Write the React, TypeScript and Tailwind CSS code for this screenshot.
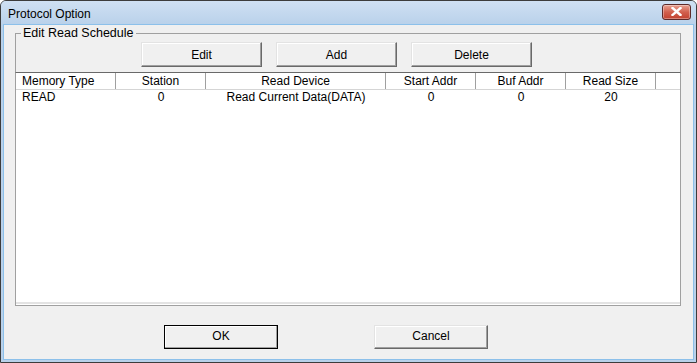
import React from "react";

const columns = [
  { title: "Memory Type", width: "w-[100px]", align: "text-left pl-[6px]" },
  { title: "Station", width: "w-[90px]", align: "text-center" },
  { title: "Read Device", width: "w-[180px]", align: "text-center" },
  { title: "Start Addr", width: "w-[90px]", align: "text-center" },
  { title: "Buf Addr", width: "w-[90px]", align: "text-center" },
  { title: "Read Size", width: "w-[90px]", align: "text-center" },
];

const rows = [["READ", "0", "Read Current Data(DATA)", "0", "0", "20"]];

const btn =
  "bg-[#f0f0f0] border border-[#696969] border-t-[#e3e3e3] border-l-[#e3e3e3] shadow-[inset_-1px_-1px_0_#a0a0a0,inset_1px_1px_0_#ffffff] text-[12px] text-black flex items-center justify-center";

const App: React.FC = () => {
  return (
    <div
      className="w-[697px] h-[363px] flex flex-col bg-[#b9d1ea] border border-[#3c3c3c] rounded-t-[6px] overflow-hidden"
      style={{ fontFamily: '"Liberation Sans", Arial, sans-serif' }}
    >
      {/* Title bar */}
      <div className="h-[24px] flex items-center justify-between pl-[7px] pr-[5px] bg-gradient-to-b from-[#cfe0f3] to-[#b9d1ea]">
        <span className="text-[12px] text-black pt-[2px]">Protocol Option</span>
        <button className="w-[29px] h-[16px] -mt-[3px] rounded-[3px] border border-[#5c2a2a] bg-gradient-to-b from-[#e8a192] via-[#d2614f] to-[#c2402e] flex items-center justify-center shadow-[inset_0_0_0_1px_rgba(255,255,255,0.35)]">
          <svg width="11" height="9" viewBox="0 0 11 9">
            <path
              d="M1.5 1 L9.5 8 M9.5 1 L1.5 8"
              stroke="#ffffff"
              strokeWidth="2.4"
              strokeLinecap="square"
            />
          </svg>
        </button>
      </div>

      {/* Client area */}
      <div className="flex-1 mx-[3px] mb-[3px] bg-[#f0f0f0] flex flex-col shadow-[0_0_0_1px_#8cc0ea]">
        <fieldset className="mt-[1px] ml-[11px] w-[666px] border border-b-0 border-[#a0a0a0] flex flex-col">
          <legend className="ml-[5px] px-[2px] text-[12.5px] leading-[14px] text-black">
            Edit Read Schedule
          </legend>

          <div className="flex gap-[14px] pl-[125px] mt-[2px]">
            <button className={`${btn} w-[121px] h-[25px]`}>Edit</button>
            <button className={`${btn} w-[121px] h-[25px]`}>Add</button>
            <button className={`${btn} w-[121px] h-[25px]`}>Delete</button>
          </div>

          {/* List view */}
          <div className="-mx-[1px] mt-[5px] h-[234px] flex flex-col bg-white border border-[#a0a0a0] border-t-[#696969] text-[12px] text-black">
            <div className="h-[17px] flex border-b border-[#d5d5d5] bg-white">
              {columns.map((c) => (
                <div
                  key={c.title}
                  className={`${c.width} ${c.align} leading-[16px] border-r border-[#a0a0a0] shrink-0`}
                >
                  {c.title}
                </div>
              ))}
              <div className="flex-1" />
            </div>

            <div className="flex-1 flex flex-col">
              {rows.map((r, i) => (
                <div key={i} className="h-[15px] flex leading-[15px]">
                  {r.map((cell, j) => (
                    <div
                      key={j}
                      className={`${columns[j].width} ${columns[j].align} shrink-0`}
                    >
                      {cell}
                    </div>
                  ))}
                </div>
              ))}
            </div>
            <div className="h-[2px] bg-[#e3e3e3] mb-[1px]" />
          </div>
        </fieldset>

        <div className="flex gap-[96px] pl-[160px] mt-[19px]">
          <button className={`${btn} w-[114px] h-[24px] pb-[2px] outline outline-1 outline-black -outline-offset-1`}>
            OK
          </button>
          <button className={`${btn} w-[114px] h-[24px] pb-[2px]`}>Cancel</button>
        </div>
      </div>
    </div>
  );
};

export default App;
